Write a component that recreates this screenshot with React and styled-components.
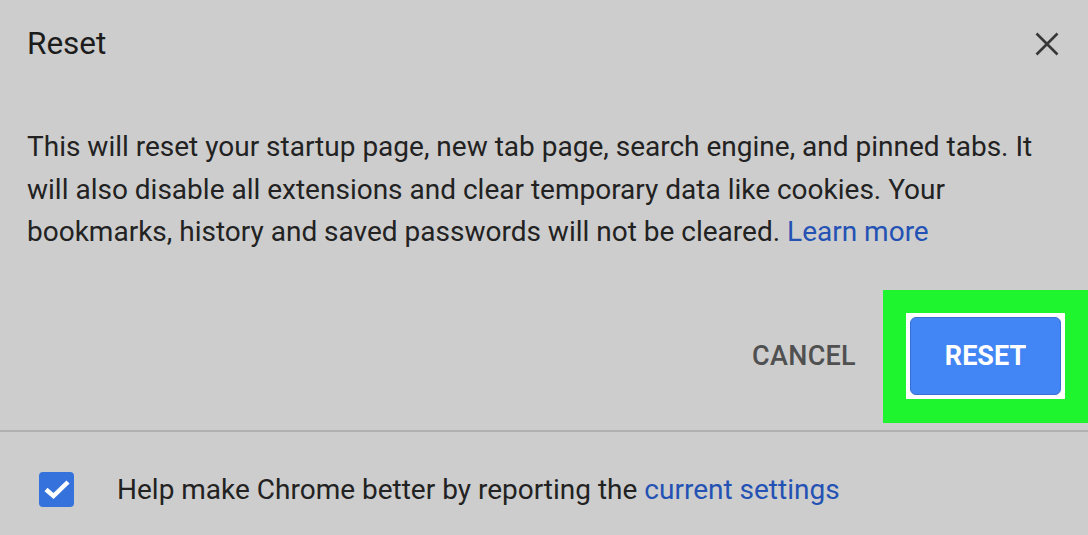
import React from "react";
import styled, { createGlobalStyle } from "styled-components";

const GlobalStyle = createGlobalStyle`
  html, body {
    margin: 0;
    padding: 0;
    background: #cdcdcd;
    font-family: Roboto, "Liberation Sans", Arial, sans-serif;
    overflow: hidden;
  }
`;

const Dialog = styled.div`
  width: 1088px;
  height: 535px;
  background: #cdcdcd;
  display: flex;
  flex-direction: column;
`;

const Header = styled.div`
  display: flex;
  justify-content: space-between;
  align-items: center;
  padding: 24px 29px 0 27px;
  height: 40px;
`;

const Title = styled.h1`
  margin: 0;
  font-size: 31.5px;
  line-height: 40px;
  font-weight: 400;
  color: #1c1c1c;
`;

const CloseButton = styled.button`
  width: 24px;
  height: 24px;
  padding: 0;
  border: 0;
  background: none;
  display: flex;
`;

const Body = styled.p`
  margin: 62px 0 0;
  padding: 0 27px;
  font-size: 28px;
  line-height: 42.5px;
  color: #222;
`;

const Link = styled.a`
  color: #2452b4;
  text-decoration: none;
`;

const Actions = styled.div`
  display: flex;
  justify-content: flex-end;
  align-items: center;
  margin-top: 36px;
  gap: 27px;
`;

const TextButton = styled.button`
  border: 0;
  background: none;
  padding: 0;
  font-family: inherit;
  font-size: 27px;
  font-weight: 500;
  color: #505050;
  letter-spacing: 0.3px;
`;

const Highlight = styled.div`
  background: #1ff52e;
  padding: 23px 23px 24px 23px;
  display: flex;
`;

const Frame = styled.div`
  background: #fff;
  padding: 4px;
  display: flex;
`;

const PrimaryButton = styled.button`
  width: 151px;
  height: 78px;
  border-radius: 6px;
  border: 1px solid #3a6fd4;
  background: #4285f4;
  color: #fff;
  font-family: inherit;
  font-size: 27px;
  font-weight: 700;
  padding: 0;
`;

const Divider = styled.hr`
  margin: 7px 0 0;
  border: 0;
  height: 2px;
  background: #b0b0b0;
`;

const Footer = styled.label`
  display: flex;
  align-items: center;
  gap: 43px;
  padding: 40px 0 0 39px;
  font-size: 28px;
  color: #222;
`;

const Checkbox = styled.span`
  width: 35px;
  height: 35px;
  border-radius: 4px;
  background: #3672dc;
  display: flex;
  align-items: center;
  justify-content: center;
`;

export default function App() {
  return (
    <>
      <GlobalStyle />
      <Dialog>
        <Header>
          <Title>Reset</Title>
          <CloseButton aria-label="Close">
            <svg width="24" height="24" viewBox="0 0 24 24">
              <path
                d="M1.5 1.5 L22.5 22.5 M22.5 1.5 L1.5 22.5"
                stroke="#383838"
                strokeWidth="2.6"
                fill="none"
              />
            </svg>
          </CloseButton>
        </Header>
        <Body>
          This will reset your startup page, new tab page, search engine, and
          pinned tabs. It will also disable all extensions and clear temporary
          data like cookies. Your bookmarks, history and saved passwords will
          not be cleared. <Link href="#">Learn more</Link>
        </Body>
        <Actions>
          <TextButton>CANCEL</TextButton>
          <Highlight>
            <Frame>
              <PrimaryButton>RESET</PrimaryButton>
            </Frame>
          </Highlight>
        </Actions>
        <Divider />
        <Footer>
          <Checkbox>
            <svg width="28" height="24" viewBox="0 0 28 24">
              <path
                d="M3 12.5 L10.5 19 L25 5"
                stroke="#fff"
                strokeWidth="4.5"
                fill="none"
              />
            </svg>
          </Checkbox>
          <span>
            Help make Chrome better by reporting the{" "}
            <Link href="#">current settings</Link>
          </span>
        </Footer>
      </Dialog>
    </>
  );
}
